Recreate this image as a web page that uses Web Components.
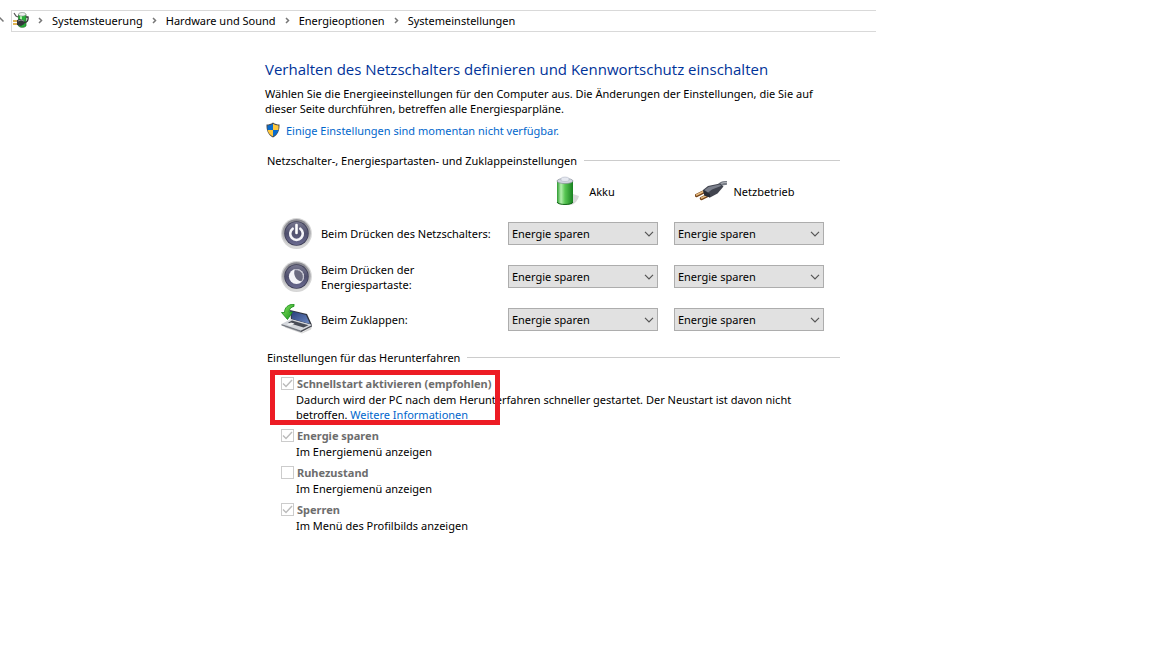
<!DOCTYPE html>
<html lang="de">
<head>
<meta charset="utf-8">
<meta name="viewport" content="width=device-width, initial-scale=1">
<title>Systemeinstellungen</title>
<style>
    :root {
        --title: #003399;
        --link: #0066cc;
        --line: #cccccc;
        --muted: #6d6d6d;
    }
    body {
        margin: 0;
        padding-top: 10px;
        background: #fff;
        color: #000;
        font: 11px/15px "Noto Sans", "Open Sans", sans-serif;
    }
</style>
</head>
<body>
<address-bar>
    <crumb-item>Systemsteuerung</crumb-item>
    <crumb-item>Hardware und Sound</crumb-item>
    <crumb-item>Energieoptionen</crumb-item>
    <crumb-item>Systemeinstellungen</crumb-item>
</address-bar>

<settings-page>
    <span slot="title">Verhalten des Netzschalters definieren und Kennwortschutz einschalten</span>
    <span slot="intro">Wählen Sie die Energieeinstellungen für den Computer aus. Die Änderungen der Einstellungen, die Sie auf dieser Seite durchführen, betreffen alle Energiesparpläne.</span>
    <span slot="unlock">Einige Einstellungen sind momentan nicht verfügbar.</span>

    <setting-group heading="Netzschalter-, Energiespartasten- und Zuklappeinstellungen">
        <power-columns></power-columns>
        <power-row icon="power">Beim Drücken des Netzschalters:</power-row>
        <power-row icon="sleep">Beim Drücken der Energiespartaste:</power-row>
        <power-row icon="lid">Beim Zuklappen:</power-row>
    </setting-group>

    <setting-group class="shutdown" heading="Einstellungen für das Herunterfahren">
        <shutdown-option label="Schnellstart aktivieren (empfohlen)" checked marked>Dadurch wird der PC nach dem Herunterfahren schneller gestartet. Der Neustart ist davon nicht betroffen. <text-link>Weitere Informationen</text-link></shutdown-option>
        <shutdown-option label="Energie sparen" checked>Im Energiemenü anzeigen</shutdown-option>
        <shutdown-option label="Ruhezustand">Im Energiemenü anzeigen</shutdown-option>
        <shutdown-option label="Sperren" checked>Im Menü des Profilbilds anzeigen</shutdown-option>
    </setting-group>
</settings-page>

<script>
// Gradient ids are local to the shadow root each icon is rendered in
const DISC = `
    <defs>
        <linearGradient id="rim" x1="0" y1="0" x2="0" y2="1">
            <stop offset="0" stop-color="#85858c"/><stop offset=".5" stop-color="#aaaaae"/><stop offset="1" stop-color="#dcdcdc"/>
        </linearGradient>
        <linearGradient id="face" x1="0" y1="0" x2="0" y2="1">
            <stop offset="0" stop-color="#77778e"/><stop offset=".5" stop-color="#50506e"/><stop offset="1" stop-color="#6a6a90"/>
        </linearGradient>
    </defs>
    <circle cx="15.500" cy="15.500" r="15.400" fill="#d6d6d6"/>
    <circle cx="15.500" cy="15.500" r="14.200" fill="url(#rim)"/>
    <circle cx="15.500" cy="15.500" r="12.200" fill="#3c3c55"/>
    <circle cx="15.500" cy="15.500" r="11.400" fill="url(#face)"/>`;

const ICONS = {
    power: `<svg width="32" height="32" viewBox="0 0 32 32" aria-hidden="true">${DISC}
        <path d="M11.700 10.700a6.300 6.300 0 1 0 7.600 0" fill="none" stroke="#f4f4f8" stroke-width="2.600" stroke-linecap="round"/>
        <path d="M15.500 7v8" stroke="#fff" stroke-width="2.600" stroke-linecap="round"/>
    </svg>`,
    sleep: `<svg width="32" height="32" viewBox="0 0 32 32" aria-hidden="true">${DISC}
        <circle cx="15.500" cy="15.500" r="7.600" fill="#f4f4f8"/>
        <path d="M14 8.600C11.500 13 15 20.500 20.800 20.300 24 16 22 8.500 14 8.600z" fill="#6b6b80"/>
        <path d="M14 8.600C22 8.500 24 16 20.800 20.300" fill="none" stroke="#b8b8c6"/>
    </svg>`,
    lid: `<svg width="32" height="32" viewBox="0 0 32 32" aria-hidden="true">
        <defs>
            <linearGradient id="screen" x1="0" y1="0" x2="1" y2="1">
                <stop offset="0" stop-color="#263b78"/><stop offset="1" stop-color="#6d8bc4"/>
            </linearGradient>
            <linearGradient id="arrow" x1="0" y1="0" x2="1" y2="1">
                <stop offset="0" stop-color="#8eea62"/><stop offset="1" stop-color="#118e19"/>
            </linearGradient>
        </defs>
        <path d="M4 22l17 6.500 10-6-1 3-9 4-17-6z" fill="#bbb" opacity=".6"/>
        <path d="M9 6l17 4 5 11-21-5.500z" fill="#30343e"/>
        <path d="M10 7l15 4 4 9-18-5z" fill="url(#screen)"/>
        <path d="M.500 20l9.500-5 21 6-11 5.500z" fill="#d4d7dc"/>
        <path d="M7 18.800l4-2.300 16.500 4.700-5 2.300z" fill="#484c56"/>
        <path d="M6 20.500l4-2 3.500 1-4 2.200z" fill="#edeef0"/>
        <path d="M.500 20v1.500l19.500 6.800v-1.800z" fill="#777b83"/>
        <path d="M20 26.500v1.800l11-5.800V21z" fill="#4a4d55"/>
        <path d="M13 0C7 .500 3.500 3.500 3.500 8.500H.500l6 7L11.500 8H8.200C8.200 5 10 3 13 2.400z" fill="url(#arrow)" stroke="#15891a" stroke-width=".8"/>
    </svg>`,
    battery: `<svg width="32" height="30" viewBox="0 0 32 30" aria-hidden="true">
        <defs>
            <linearGradient id="cell" x1="0" y1="0" x2="1" y2="0">
                <stop offset="0" stop-color="#2c9a2f"/><stop offset=".25" stop-color="#b4f0ae"/>
                <stop offset=".5" stop-color="#58c653"/><stop offset="1" stop-color="#17811f"/>
            </linearGradient>
        </defs>
        <path d="M20 29c4-1 7-5 8-9l-6-2z" fill="#aaa" opacity=".45"/>
        <path d="M6 5v21.500c1 3.300 15 3.300 16 0V5z" fill="url(#cell)"/>
        <ellipse cx="14" cy="5" rx="8" ry="2.600" fill="#d1d5df" stroke="#8a919b" stroke-width=".7"/>
        <path d="M10 4.500V2.300C11 .600 17 .600 18 2.300v2.200c-1 1.400-7 1.400-8 0z" fill="#e5e8f0" stroke="#b4b9c6" stroke-width=".6"/>
        <path d="M6 26c1 3.300 15 3.300 16 0" fill="none" stroke="#17641c"/>
    </svg>`,
    plug: `<svg width="32" height="30" viewBox="0 0 32 30" aria-hidden="true">
        <path d="M24 10c2-3 4-3.500 8-3" fill="none" stroke="#777c85" stroke-width="4"/>
        <path d="M25 9c2-2.500 4-2.500 7-2.500" fill="none" stroke="#b1b4ba" stroke-width="1"/>
        <path d="M1.500 19.500l9-4.500M6.500 22.500l9-4.500" stroke="#754319" stroke-width="3.400" stroke-linecap="round"/>
        <path d="M1.500 19l9-4.500M6.500 22l9-4.500" stroke="#e7bc80" stroke-width="1.600" stroke-linecap="round"/>
        <path d="M8 14l5-4 12-2.500 3.500 3-6 7-7.500 4-5.500-2z" fill="#41444f"/>
        <path d="M9.500 14l4-3 11-2.500 2 1.300-9.500 3.700-4 3z" fill="#7b7f8b"/>
        <path d="M8 14l7 4v3.500l-5.500-2z" fill="#292b34"/>
    </svg>`,
    shield: `<svg width="14" height="16" viewBox="0 0 14 16" aria-hidden="true">
        <path d="M7 .500c2 1.500 4 2 6.500 2 .200 6-1.500 10.500-6.500 13C2 13 .300 8.500.500 2.500 3 2.500 5 2 7 .500z" fill="#4b4b4b"/>
        <path d="M7 1.800V8H1.600C1.400 6.500 1.400 5 1.500 3.500 3.600 3.400 5.300 2.900 7 1.800z" fill="#0a6cce"/>
        <path d="M7 1.800V8h5.400c.200-1.500.2-3 .1-4.500C10.400 3.400 8.700 2.900 7 1.800z" fill="#ffc83d"/>
        <path d="M1.600 8H7v6.400C3.900 12.900 2.200 10.700 1.600 8z" fill="#ffc83d"/>
        <path d="M12.400 8H7v6.400c3.100-1.500 4.800-3.700 5.400-6.400z" fill="#0a6cce"/>
    </svg>`,
    options: `<svg width="16" height="16" viewBox="0 0 16 16" aria-hidden="true">
        <path d="M5.500 2.500v11.500c1.500 1.800 6 1.800 7.500 0V2.500z" fill="#27b038" stroke="#246c2a" stroke-width=".7"/>
        <path d="M8 3v5" stroke="#a5f5a0" stroke-width="2"/>
        <ellipse cx="9.200" cy="2.300" rx="3.700" ry="1.800" fill="#eef1ef" stroke="#8a938c" stroke-width=".7"/>
        <path d="M11 10.500c3 0 4.500-2 4-5.500h-2" fill="none" stroke="#333" stroke-width="1.300"/>
        <path d="M1 1l2 3 2 1" fill="none" stroke="#555" stroke-width="1.200"/>
        <path d="M0 9h4M0 12h4" stroke="#d69c1c" stroke-width="1.500"/>
        <path d="M4 8l3.500-1 4 2v3L8 14l-4-1z" fill="#34373a"/>
        <path d="M5 9l3-1 3 1" fill="none" stroke="#8a8f92"/>
    </svg>`,
};

class AddressBar extends HTMLElement {
    constructor() {
        super();
        this.attachShadow({ mode: 'open' });
        this.shadowRoot.innerHTML = `
            <style>
                :host {
                    display: grid;
                    grid-template-columns: 11px 1fr;
                    width: 76%;
                    margin-right: auto;
                }
                .up { align-self: center; }
                nav {
                    display: flex;
                    align-items: center;
                    box-sizing: border-box;
                    height: 22px;
                    padding: 0 0 2px 1px;
                    border: 1px solid #d9d9d9;
                    border-right: 0;
                }
                svg { display: block; flex: none; }
            </style>
            <svg class="up" width="5" height="8" viewBox="0 0 5 8" aria-hidden="true">
                <path d="M-1 0l4.500 4.500" fill="none" stroke="#777" stroke-width="1.500"/>
            </svg>
            <nav aria-label="Pfad">${ICONS.options}<slot></slot></nav>`;
    }
}

class CrumbItem extends HTMLElement {
    constructor() {
        super();
        this.attachShadow({ mode: 'open' });
        this.shadowRoot.innerHTML = `
            <style>
                :host { display: flex; align-items: center; }
                svg { margin: 0 9px; }
                a { color: inherit; text-decoration: none; white-space: nowrap; }
            </style>
            <svg width="5" height="7" viewBox="0 0 5 7" aria-hidden="true">
                <path d="M1 1l2.500 2.500L1 6" fill="none" stroke="#777" stroke-width="1.500"/>
            </svg>
            <a href="#"><slot></slot></a>`;
    }
}

class TextLink extends HTMLElement {
    constructor() {
        super();
        this.attachShadow({ mode: 'open' });
        this.shadowRoot.innerHTML = `
            <style>
                a { color: var(--link); text-decoration: none; }
                a:hover { text-decoration: underline; }
            </style>
            <a href="#"><slot></slot></a>`;
    }
}

class SettingsPage extends HTMLElement {
    constructor() {
        super();
        this.attachShadow({ mode: 'open' });
        this.shadowRoot.innerHTML = `
            <style>
                :host {
                    display: block;
                    max-width: 575px;
                    margin-left: 23%;
                    padding: 27px 0 40px;
                }
                h1 {
                    margin: 0 0 7px;
                    color: var(--title);
                    font: 15px/20px "Open Sans", "Noto Sans", sans-serif;
                }
                p { margin: 0 0 6px; }
                .unlock {
                    display: flex;
                    align-items: center;
                    gap: 6px;
                    height: 16px;
                    margin-bottom: 15px;
                    padding-left: 1px;
                }
            </style>
            <h1><slot name="title"></slot></h1>
            <p><slot name="intro"></slot></p>
            <div class="unlock">${ICONS.shield}<text-link><slot name="unlock"></slot></text-link></div>
            <slot></slot>`;
    }
}

class SettingGroup extends HTMLElement {
    constructor() {
        super();
        this.attachShadow({ mode: 'open' });
        this.shadowRoot.innerHTML = `
            <style>
                :host { display: block; margin-bottom: 9px; }
                header {
                    display: flex;
                    align-items: center;
                    gap: 7px;
                    margin: 0 0 8px 2px;
                }
                :host(.shutdown) header { margin-bottom: 10px; }
                h2 { margin: 0; font: inherit; }
                .rule { flex: 1; height: 1px; background: var(--line); }
                .body { padding-left: 16px; }
            </style>
            <header><h2></h2><div class="rule"></div></header>
            <div class="body"><slot></slot></div>`;
        this.shadowRoot.querySelector('h2').textContent = this.getAttribute('heading');
    }
}

class PowerColumns extends HTMLElement {
    constructor() {
        super();
        this.attachShadow({ mode: 'open' });
        this.shadowRoot.innerHTML = `
            <style>
                :host {
                    display: grid;
                    grid-template-columns: 211px 150px 150px;
                    column-gap: 16px;
                    margin-bottom: 6px;
                }
                div {
                    display: flex;
                    align-items: center;
                    justify-content: center;
                    gap: 6px;
                    height: 30px;
                }
                .mains { padding-right: 8px; }
            </style>
            <span></span>
            <div>${ICONS.battery}<span>Akku</span></div>
            <div class="mains">${ICONS.plug}<span>Netzbetrieb</span></div>`;
    }
}

class PowerSelect extends HTMLElement {
    constructor() {
        super();
        this.attachShadow({ mode: 'open' });
        this.shadowRoot.innerHTML = `
            <style>
                :host { display: grid; align-items: center; }
                select, svg { grid-area: 1 / 1; }
                select {
                    appearance: none;
                    box-sizing: border-box;
                    width: 100%;
                    height: 23px;
                    margin: 0;
                    padding: 0 20px 0 3px;
                    border: 1px solid #adadad;
                    border-radius: 0;
                    background: #e1e1e1;
                    color: #000;
                    font: inherit;
                }
                svg { justify-self: end; margin-right: 4px; pointer-events: none; }
            </style>
            <select>
                <option>Nichts unternehmen</option>
                <option selected>Energie sparen</option>
                <option>Ruhezustand</option>
                <option>Herunterfahren</option>
            </select>
            <svg width="10" height="6" viewBox="0 0 10 6" aria-hidden="true">
                <path d="M1 .8l4 4 4-4" fill="none" stroke="#555" stroke-width="1.200"/>
            </svg>`;
        this.shadowRoot.querySelector('select').setAttribute('aria-label', this.getAttribute('label'));
    }
}

class PowerRow extends HTMLElement {
    constructor() {
        super();
        const label = this.textContent.trim();
        this.attachShadow({ mode: 'open' });
        this.shadowRoot.innerHTML = `
            <style>
                :host {
                    display: grid;
                    grid-template-columns: 211px 150px 150px;
                    column-gap: 16px;
                    align-items: center;
                    min-height: 43px;
                }
                .name { display: flex; align-items: center; gap: 8px; }
                svg { display: block; flex: none; }
            </style>
            <div class="name">${ICONS[this.getAttribute('icon')]}<span><slot></slot></span></div>
            <power-select label="${label} Akku"></power-select>
            <power-select label="${label} Netzbetrieb"></power-select>`;
    }
}

class ShutdownOption extends HTMLElement {
    constructor() {
        super();
        const checked = this.hasAttribute('checked');
        this.attachShadow({ mode: 'open' });
        this.shadowRoot.innerHTML = `
            <style>
                :host { display: block; position: relative; margin-bottom: 5px; }
                label {
                    display: flex;
                    align-items: center;
                    gap: 3px;
                    height: 16px;
                    margin-bottom: 1px;
                    color: var(--muted);
                    font-weight: bold;
                }
                .box { display: grid; place-items: center; }
                .box > * { grid-area: 1 / 1; }
                input {
                    appearance: none;
                    box-sizing: border-box;
                    width: 13px;
                    height: 13px;
                    margin: 0;
                    border: 1px solid var(--line);
                    background: #fff;
                }
                svg { display: none; pointer-events: none; }
                input:checked + svg { display: block; }
                .text { padding: 0 16px 0 15px; }
                /* red frame over the option */
                :host([marked])::after {
                    content: "";
                    position: absolute;
                    top: -5px;
                    left: -11px;
                    box-sizing: border-box;
                    width: 230px;
                    height: 55px;
                    border: 5px solid #ed1c24;
                    pointer-events: none;
                }
            </style>
            <label>
                <span class="box">
                    <input type="checkbox" disabled ${checked ? 'checked' : ''}>
                    <svg width="11" height="9" viewBox="0 0 11 9" aria-hidden="true">
                        <path d="M1 4.500l3 3 6-6.500" fill="none" stroke="#bbb" stroke-width="1.400"/>
                    </svg>
                </span>
                <span>${this.getAttribute('label')}</span>
            </label>
            <div class="text"><slot></slot></div>`;
    }
}

customElements.define('address-bar', AddressBar);
customElements.define('crumb-item', CrumbItem);
customElements.define('text-link', TextLink);
customElements.define('settings-page', SettingsPage);
customElements.define('setting-group', SettingGroup);
customElements.define('power-columns', PowerColumns);
customElements.define('power-select', PowerSelect);
customElements.define('power-row', PowerRow);
customElements.define('shutdown-option', ShutdownOption);
</script>
</body>
</html>
